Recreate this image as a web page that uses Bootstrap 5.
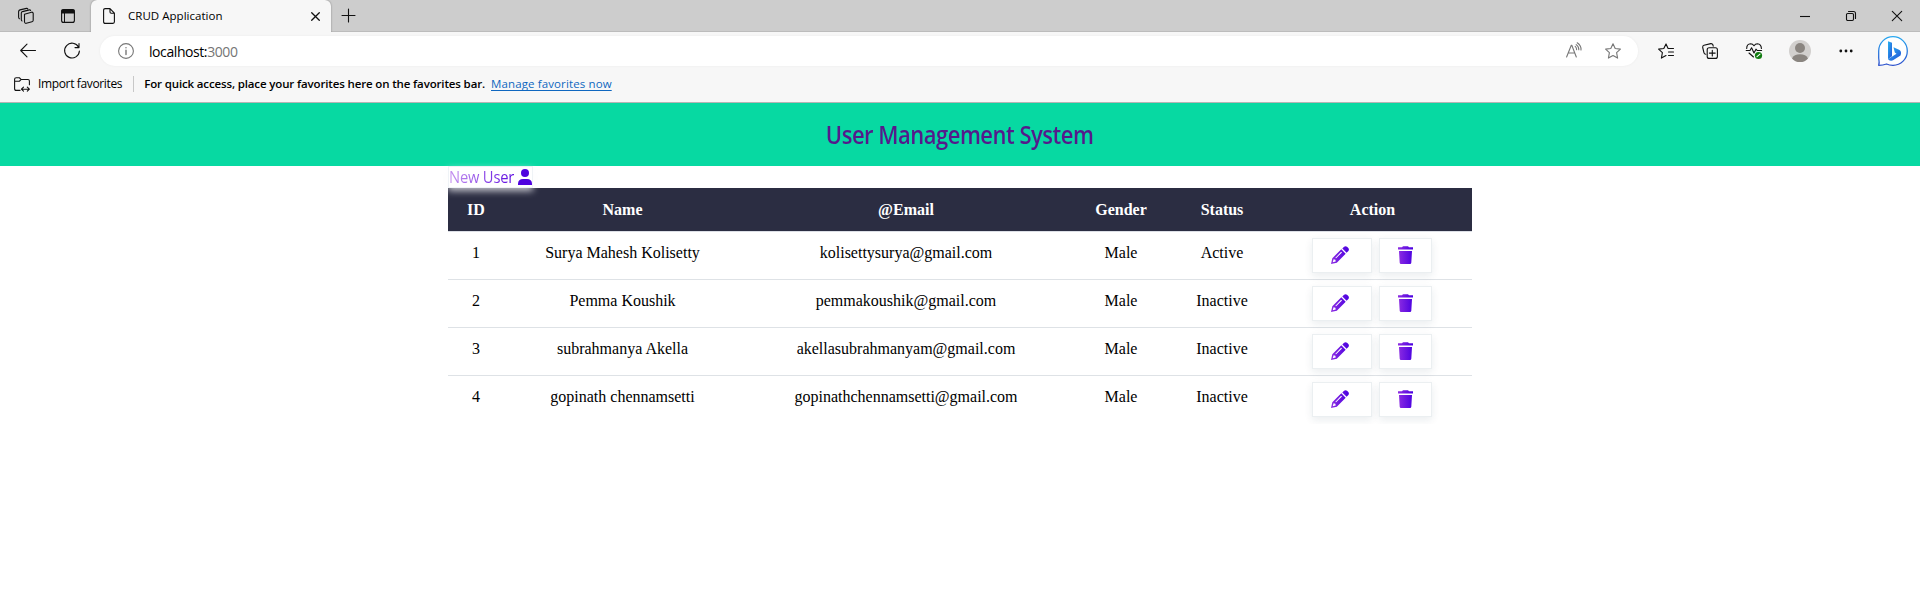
<!DOCTYPE html>
<html lang="en">
<head>
<meta charset="utf-8">
<title>CRUD Application</title>
<link href="https://cdn.jsdelivr.net/npm/bootstrap@5.3.0/dist/css/bootstrap.min.css" rel="stylesheet">
<style>
body{font-family:"Open Sans","Noto Sans",sans-serif;font-size:12px;color:#000;overflow:hidden;background:#fff}
svg{display:block;flex:none;fill:none;stroke:#111;stroke-width:1.1;stroke-linecap:round;stroke-linejoin:round;overflow:visible}
.strip{height:32px;background:#cdcdcd;padding-left:18px;box-shadow:inset 0 -1px 0 #bcbcbc}
.tab-page{width:240px;height:32px;margin-left:16px;background:#f7f7f7;border-radius:6px 6px 0 0;padding:0 11px 0 12px;box-shadow:0 0 2px #0006;clip-path:inset(0 -3px 0 -3px)}
.tools{height:38px;background:#f7f7f7;padding-left:20px}
.address{width:1538px;height:30px;border-radius:15px;background:#fff;margin-left:20px;padding:0 17px 0 18px;font-size:14px;box-shadow:0 0 3px #0000000d}
.favbar{height:33px;background:#f7f7f7;border-bottom:1px solid #b5b5b5;padding:0 0 4px 14px}
.rule{width:1px;height:16px;background:#c8c8c8;margin:0 10px 0 11px}
.t-tab{font-size:11.5px;letter-spacing:.03px}
.t-host{letter-spacing:-.42px}
.t-imp{letter-spacing:-.36px}
.t-msg{font-weight:600;font-size:11.5px;letter-spacing:-.14px}
.t-man{font-size:11.5px;font-weight:500;color:#0f67c0;letter-spacing:.12px;text-underline-offset:2px}
.hero{height:63px;background:#07d9a2}
.hero h1{font-family:"Open Sans",sans-serif;font-size:24.5px;font-weight:600;color:#551a8b;letter-spacing:-.5px;line-height:30px;white-space:nowrap;transform:scaleX(.894)}
.wrap{width:1024px}
.newuser{width:85px;height:22px;border:1px solid #eff3f6;background:#fff;box-shadow:0 3px 7px rgba(250,250,252,.75);position:relative;font-size:16px;line-height:20px;white-space:nowrap}
.newuser span{background:linear-gradient(90deg,#c795f0,#5a06e0);-webkit-background-clip:text;background-clip:text;color:transparent;letter-spacing:-.2px;transform:scaleX(.92);transform-origin:0 50%;margin-right:-8px}
.users{table-layout:fixed;width:1024px;font-family:"Liberation Serif",serif;font-size:16px;line-height:18px;text-align:center;border-collapse:separate;border-spacing:0}
.users th{background:#2b2d42;color:#fff;height:44px;padding:1px 0 0;border-bottom:1px solid #dcdfe6;vertical-align:middle}
.users td{height:48px;padding:12px 0 0;vertical-align:top;border-bottom:1px solid #dee2e6}
.users tr:last-child td{border-bottom-color:transparent}
.users td.acts{padding:6px 2px 0 0}
.acts>div{gap:7px}
.act{height:35px;border:1px solid #ebeff1;background:#fff;box-shadow:0 3px 8px rgba(20,50,80,.09);padding:0 0 1px 18px}
.act svg{stroke:none}
.edit{width:60px}
.del{width:53px}
</style>
</head>
<body>
<svg width="0" height="0" class="position-absolute"><defs>
<linearGradient id="vio" x1="0" x2="1" y1="0" y2="0"><stop offset="0" stop-color="#8e2de2"/><stop offset="1" stop-color="#4a00e0"/></linearGradient>
<linearGradient id="blu" x1="0" x2="1" y1="0" y2="1"><stop offset="0" stop-color="#28b4f0"/><stop offset="1" stop-color="#2450d8"/></linearGradient>
<linearGradient id="rim" x1="0" x2="0" y1="0" y2="1"><stop offset="0" stop-color="#28a8f0"/><stop offset="1" stop-color="#2c50cc"/></linearGradient>
<symbol id="pencil" viewBox="0 0 18 18"><path fill="url(#vio)" fill-rule="evenodd" d="M0 18L1.3 12.2 10.3 3.3 14.7 7.7 5.8 16.7ZM1.7 16.3L4.7 15.5 4.4 13.8 2.6 13.3ZM4.2 12L5.1 12.3 11 6.4 10.1 5.8ZM11.3 2.4L13.1.7C14 0 15.2 0 16 .8L17.3 2.1C18.1 3 18.1 4 17.4 4.9L15.6 6.7Z"/></symbol>
<symbol id="trash" viewBox="0 0 15 18"><path fill="url(#vio)" d="M0 1.3H4L5 .3H10L11 1.3H15V3.5H0ZM1 5H14L13.3 16.8Q13.2 18 12 18H3Q1.8 18 1.7 16.8Z"/></symbol>
</defs></svg>

<header>
<div class="strip d-flex">
  <svg width="16" height="16" class="mt-2"><path d="M6.5 6.2L13.5 4.2Q15 4 15.2 5.4V12.3Q15.2 13.5 14 13.8L8.3 15.3Q6.7 15.5 6.5 14ZM4 13Q3.3 12.8 3.3 11.5V5Q3.3 4 4.5 3.6L11.5 1.9Q12.3 1.8 12.6 2.4M1.4 10.7Q.6 10.2.6 9V3.6Q.7 2.3 2 1.9L8.5.4Q9.3.2 9.8.8"/></svg>
  <svg width="14" height="14" style="margin:9px 0 0 27px"><rect x=".6" y=".6" width="12.8" height="12.8" rx="2"/><path d="M1 1H13V4H1Z" fill="#111"/><path d="M3.5 4V13" stroke-width="1"/></svg>
  <div class="tab-page d-flex align-items-center">
    <svg width="12" height="16"><path d="M2.2.6H7L11.4 5.2V13.8Q11.4 15.4 10 15.4H2.2Q.6 15.4.6 13.8V2.2Q.6.6 2.2.6ZM7 .6V4Q7 5.2 8.2 5.2H11.4"/></svg>
    <span class="t-tab" style="margin-left:13px">CRUD Application</span>
    <svg width="9" height="9" class="ms-auto"><path d="M.7.7L8.3 8.3M8.3.7L.7 8.3" stroke-width="1.3"/></svg>
  </div>
  <svg width="13" height="13" style="margin:9px 0 0 11px"><path d="M6.5 0V13M0 6.5H13"/></svg>
  <div class="d-flex ms-auto" style="gap:36px;padding:11px 18px 0 0">
    <svg width="10" height="10"><path d="M0 5.5H10" stroke-linecap="butt"/></svg>
    <svg width="10" height="10"><rect x=".5" y="2.5" width="7" height="7" rx="1.2"/><path d="M2.5.5H7.5Q9.5.5 9.5 2.5V7.5"/></svg>
    <svg width="10" height="10"><path d="M.3.3L9.7 9.7M9.7.3L.3 9.7"/></svg>
  </div>
</div>

<div class="tools d-flex align-items-center">
  <svg width="16" height="14"><path d="M15.5 6.5H.7M7 .2L.7 6.5 7 12.8"/></svg>
  <svg width="16" height="16" style="margin-left:28px"><path d="M14.6 4.2A7.4 7.4 0 1 0 15.4 8M15 .6V4.6H11"/></svg>
  <div class="address d-flex align-items-center">
    <svg width="16" height="16" style="stroke:#777"><circle cx="8" cy="8" r="7.4"/><path d="M8 7.3V11.5M8 4.6V4.8" stroke-width="1.4"/></svg>
    <span class="t-host" style="margin-left:15px">localhost:<span style="color:#757575">3000</span></span>
    <svg width="16" height="16" class="ms-auto" style="stroke:#777"><path d="M.6 14L5.3 2.2H5.8L10.3 14M2.2 10H8.8M9.2 3.4Q10.7 4.7 10.6 6.6M10.2 1.6Q13 3.6 12.8 6.8M11.2-.2Q15.4 2.6 15 7"/></svg>
    <svg width="16" height="16" style="stroke:#777;margin-left:23px"><path d="M8 .7L10.2 5.5 15.4 6.1 11.6 9.7 12.6 15.1 8 12.5 3.4 15.1 4.4 9.7.6 6.1 5.8 5.5Z"/></svg>
  </div>
  <svg width="16" height="16" style="margin-left:20px"><path d="M15.5 5.5H10.1L8 .9 5.8 5.5.6 6.1 4.4 9.7 3.4 15.1 8 12.5M10.5 9H15.5M10.5 12.5H15.5"/></svg>
  <svg width="16" height="16" style="margin-left:28px"><path d="M3.8 11.3Q2.4 11.2 2 9.8L.7 4.5Q.4 2.7 2 2.2L8.8.6Q10.3.4 10.9 1.8L11.2 3.2"/><rect x="5.2" y="4.8" width="10.2" height="10.6" rx="2"/><path d="M10.3 7.2V13M7.4 10.1H13.2"/></svg>
  <svg width="16" height="16" style="margin-left:28px"><path d="M.7 5.5Q.7 1 4.6.8 6.7.8 8 2.7 9.3.8 11.4.8 15.2 1 15.4 5.5M.2 7.5H4L5.6 4.8 8 10 10 6.2 11.2 7.5H15.6M3 10L7.5 14"/><circle cx="12.5" cy="12.5" r="3.6" fill="#107c10" stroke="none"/><path d="M11 13.7L14 11.2" stroke="#fff"/></svg>
  <svg width="22" height="22" style="margin-left:27px;stroke:none"><circle cx="11" cy="11" r="11" fill="#d2d0ce"/><circle cx="11" cy="8" r="5" fill="#8a8580"/><path d="M3 18.4Q5 14.3 11 14.3T19 18.4Q16 22 11 22T3 18.4Z" fill="#8a8580"/></svg>
  <svg width="14" height="4" style="margin-left:28px;stroke:none;fill:#111"><circle cx="1.8" cy="2" r="1.4"/><circle cx="7" cy="2" r="1.4"/><circle cx="12.2" cy="2" r="1.4"/></svg>
  <svg width="30" height="30" style="margin-left:25px"><path d="M.7 29.3Q1.6 27 .7 22V15A14.3 14.3 0 1 1 15 29.3Q11.5 29.3 8.5 28 5 29.2.7 29.3Z" fill="#fff" stroke="url(#rim)" stroke-width="1.3"/><path d="M10 5.2L14 6.8V20.3L10 23.2Z" fill="url(#blu)" stroke="none"/><path d="M15.5 11.2L21.5 14Q24 15.7 22.5 19.5L15 24.3Q12.5 25.5 10 23.2L18.5 17.8 16.8 16.5Z" fill="url(#blu)" stroke="none"/></svg>
</div>

<div class="favbar d-flex align-items-center">
  <svg width="16" height="15"><path d="M6 13.4H2.2Q.6 13.4.6 11.8V2.2Q.6.7 2.2.7H5.3L7 2.5H14Q15.4 2.5 15.4 4V7.8M.6 4.3H5.3L7 2.5M7.5 12.2H15.3M9.5 10.2L7.4 12.2 9.5 14.2M13.3 10.2L15.4 12.2 13.3 14.2"/></svg>
  <span class="t-imp" style="margin-left:8px">Import favorites</span>
  <span class="rule"></span>
  <span class="t-msg">For quick access, place your favorites here on the favorites bar.</span>
  <a href="#" class="t-man" style="margin-left:6px">Manage favorites now</a>
</div>
</header>

<div class="hero d-flex justify-content-center align-items-center"><h1 class="m-0">User Management System</h1></div>

<main class="wrap mx-auto">
  <div class="newuser d-flex align-items-center"><span>New User</span>
    <svg width="14" height="16" class="ms-auto" style="stroke:none;fill:#4f02df"><circle cx="7" cy="4" r="4"/><path d="M0 16V14.5Q.3 10 5 10H9Q13.7 10 14 14.5V16Z"/></svg>
  </div>
  <table class="users">
    <colgroup><col style="width:56px"><col style="width:237px"><col style="width:330px"><col style="width:100px"><col style="width:102px"><col style="width:199px"></colgroup>
    <thead><tr><th>ID</th><th>Name</th><th>@Email</th><th>Gender</th><th>Status</th><th>Action</th></tr></thead>
    <tbody>
      <tr><td>1</td><td>Surya Mahesh Kolisetty</td><td>kolisettysurya@gmail.com</td><td>Male</td><td>Active</td><td class="acts"><div class="d-flex justify-content-center"><button class="act edit"><svg width="18" height="18"><use href="#pencil"/></svg></button><button class="act del"><svg width="15" height="18"><use href="#trash"/></svg></button></div></td></tr>
      <tr><td>2</td><td>Pemma Koushik</td><td>pemmakoushik@gmail.com</td><td>Male</td><td>Inactive</td><td class="acts"><div class="d-flex justify-content-center"><button class="act edit"><svg width="18" height="18"><use href="#pencil"/></svg></button><button class="act del"><svg width="15" height="18"><use href="#trash"/></svg></button></div></td></tr>
      <tr><td>3</td><td>subrahmanya Akella</td><td>akellasubrahmanyam@gmail.com</td><td>Male</td><td>Inactive</td><td class="acts"><div class="d-flex justify-content-center"><button class="act edit"><svg width="18" height="18"><use href="#pencil"/></svg></button><button class="act del"><svg width="15" height="18"><use href="#trash"/></svg></button></div></td></tr>
      <tr><td>4</td><td>gopinath chennamsetti</td><td>gopinathchennamsetti@gmail.com</td><td>Male</td><td>Inactive</td><td class="acts"><div class="d-flex justify-content-center"><button class="act edit"><svg width="18" height="18"><use href="#pencil"/></svg></button><button class="act del"><svg width="15" height="18"><use href="#trash"/></svg></button></div></td></tr>
    </tbody>
  </table>
</main>
<script src="https://cdn.jsdelivr.net/npm/bootstrap@5.3.0/dist/js/bootstrap.bundle.min.js"></script>
</body>
</html>
